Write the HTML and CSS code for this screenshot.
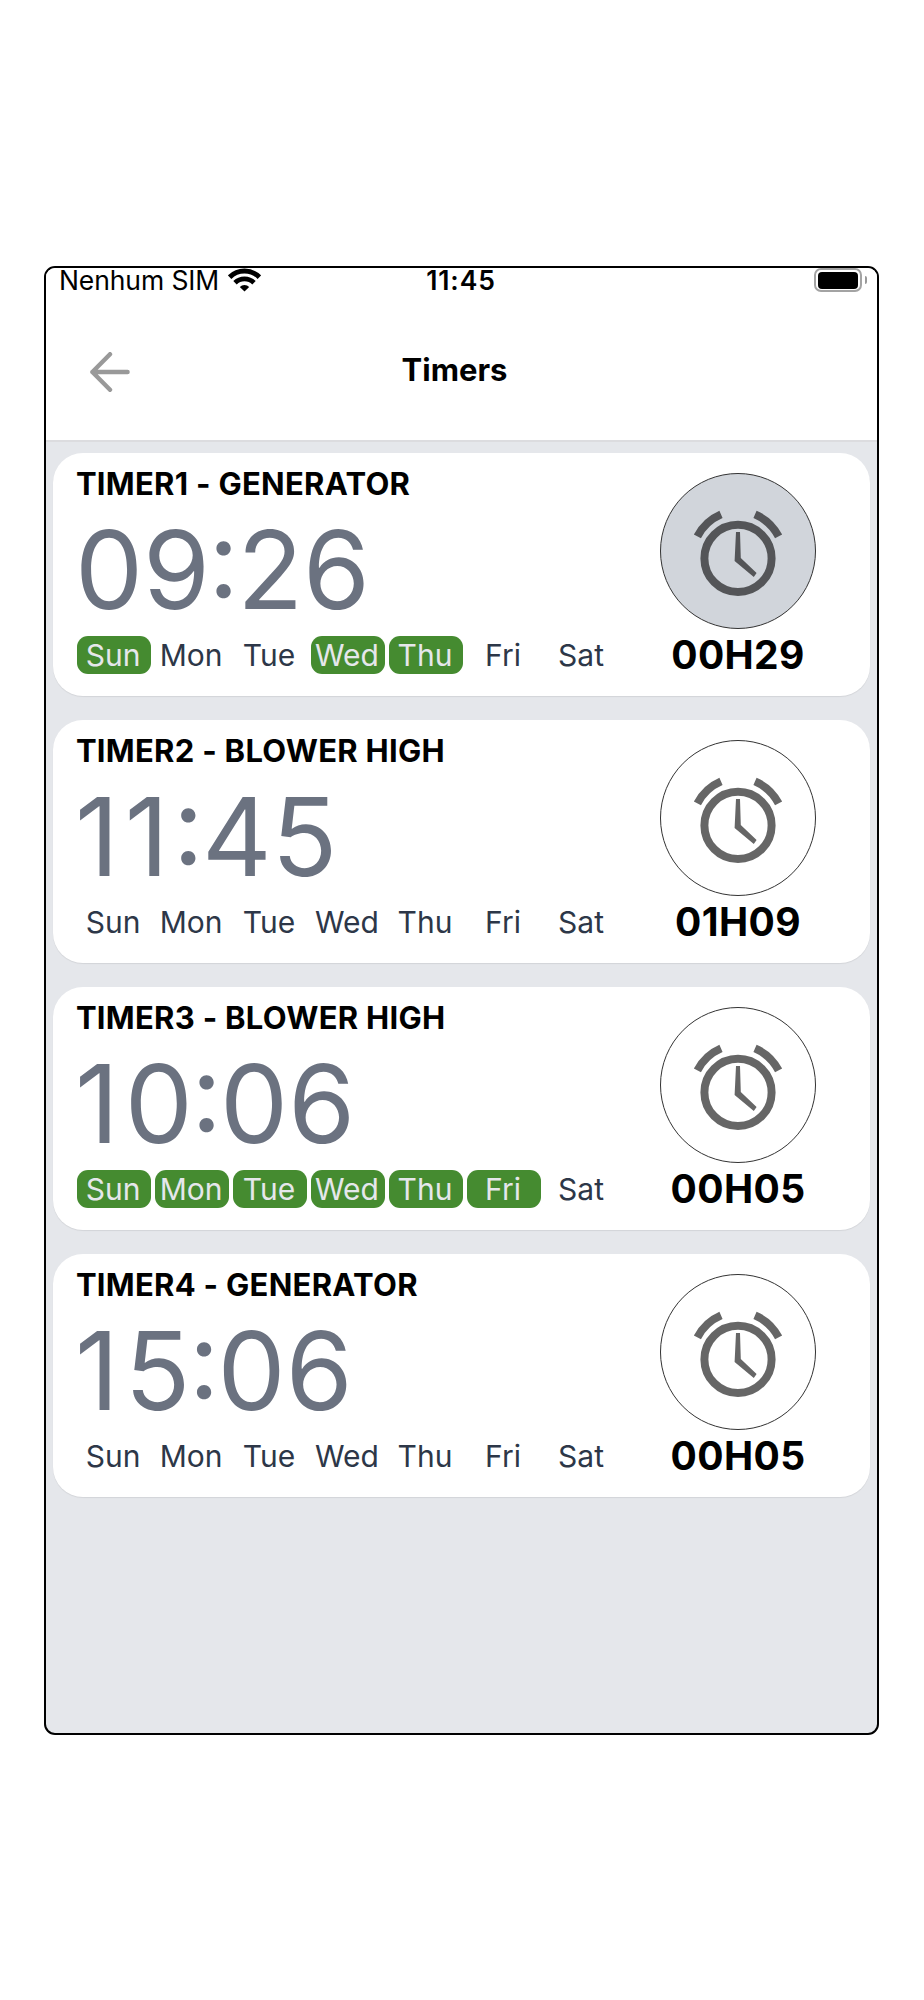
FILE: index.html
```html
<!doctype html>
<html lang="en">
<head>
    <meta charset="UTF-8">
    <meta name="viewport" content="width=device-width, initial-scale=1.0">
    <title>Timers</title>
    <link rel="stylesheet" href="styles.css">
</head>
<body>

    <svg class="sprite" width="0" height="0">
        <symbol id="alarm" viewBox="0 0 90 90">
            <circle cx="45" cy="52.4" r="33.6" fill="none" stroke="currentColor" stroke-width="8"/>
            <path d="M4.4 30.4 A48 48 0 0 1 28 8.4 M85.6 30.4 A48 48 0 0 0 62 8.4" fill="none" stroke="currentColor" stroke-width="8"/>
            <path d="M43 26 L47 26 L47.8 52 L63.6 67 L60.8 71 L41.6 55 Z" fill="currentColor"/>
        </symbol>
    </svg>

    <div class="phone">
        <div class="status">
            <div class="carrier">
                <span>Nenhum SIM</span>
                <svg class="wifi" viewBox="0 0 33 24">
                    <path d="M1.6 9.2 A21 21 0 0 1 31.4 9.2" fill="none" stroke="#000" stroke-width="5"/>
                    <path d="M7 14.8 A13.5 13.5 0 0 1 26 14.8" fill="none" stroke="#000" stroke-width="4.8"/>
                    <path d="M11.8 19 A6.6 6.6 0 0 1 21.2 19 L16.5 23.6 Z" fill="#000"/>
                </svg>
            </div>
            <span class="clock">11:45</span>
            <div class="battery">
                <div class="battery-body"><div class="battery-level"></div></div>
                <div class="battery-tip"></div>
            </div>
        </div>

        <div class="header">
            <svg class="back" viewBox="0 0 40 40">
                <path d="M20 2.2 L2.4 20 L20 37.8 M2.4 20 H37.6" fill="none" stroke="#999" stroke-width="4.4" stroke-linecap="round" stroke-linejoin="round"/>
            </svg>
            <h1>Timers</h1>
        </div>

        <div class="list">
            <div class="card">
                <div class="info">
                    <h2>TIMER1 - GENERATOR</h2>
                    <div class="time">09<span class="colon">:</span>26</div>
                    <div class="days">
                        <span class="on">Sun</span>
                        <span>Mon</span>
                        <span>Tue</span>
                        <span class="on">Wed</span>
                        <span class="on">Thu</span>
                        <span>Fri</span>
                        <span>Sat</span>
                    </div>
                </div>
                <div class="side">
                    <div class="circle active"><svg><use href="#alarm"/></svg></div>
                    <div class="duration">00H29</div>
                </div>
            </div>

            <div class="card">
                <div class="info">
                    <h2>TIMER2 - BLOWER HIGH</h2>
                    <div class="time"><span class="one">11</span><span class="colon">:</span>45</div>
                    <div class="days">
                        <span>Sun</span>
                        <span>Mon</span>
                        <span>Tue</span>
                        <span>Wed</span>
                        <span>Thu</span>
                        <span>Fri</span>
                        <span>Sat</span>
                    </div>
                </div>
                <div class="side">
                    <div class="circle"><svg><use href="#alarm"/></svg></div>
                    <div class="duration">01H09</div>
                </div>
            </div>

            <div class="card">
                <div class="info">
                    <h2>TIMER3 - BLOWER HIGH</h2>
                    <div class="time"><span class="one">1</span>0<span class="colon">:</span>06</div>
                    <div class="days">
                        <span class="on">Sun</span>
                        <span class="on">Mon</span>
                        <span class="on">Tue</span>
                        <span class="on">Wed</span>
                        <span class="on">Thu</span>
                        <span class="on">Fri</span>
                        <span>Sat</span>
                    </div>
                </div>
                <div class="side">
                    <div class="circle"><svg><use href="#alarm"/></svg></div>
                    <div class="duration">00H05</div>
                </div>
            </div>

            <div class="card">
                <div class="info">
                    <h2>TIMER4 - GENERATOR</h2>
                    <div class="time"><span class="one">1</span>5<span class="colon">:</span>06</div>
                    <div class="days">
                        <span>Sun</span>
                        <span>Mon</span>
                        <span>Tue</span>
                        <span>Wed</span>
                        <span>Thu</span>
                        <span>Fri</span>
                        <span>Sat</span>
                    </div>
                </div>
                <div class="side">
                    <div class="circle"><svg><use href="#alarm"/></svg></div>
                    <div class="duration">00H05</div>
                </div>
            </div>
        </div>
    </div>

</body>
</html>
```
FILE: styles.css
```css
* {
    box-sizing: border-box;
}
body {
    margin: 0;
    padding: 266px 45px 265px 44px;
    background: #fff;
    color: #000;
    font-family: Inter, "Liberation Sans", sans-serif;
}
h1, h2 {
    margin: 0;
}
.sprite {
    display: block;
}
.phone {
    height: 1469px;
    border: 2px solid #000;
    border-radius: 11px;
    background: #e5e7eb;
}
.status {
    display: grid;
    grid-template-columns: 1fr auto 1fr;
    height: 24px;
    padding: 0 10px 0 13px;
    border-radius: 9px 9px 0 0;
    background: #fff;
    font-size: 26.5px;
    line-height: 24px;
}
.carrier {
    display: flex;
    gap: 9px;
    letter-spacing: -0.1px;
}
.wifi {
    width: 33px;
    height: 24px;
}
.clock {
    margin-right: 4px;
    font-weight: 600;
    letter-spacing: 0.9px;
}
.battery {
    display: flex;
    justify-content: flex-end;
    align-items: center;
    gap: 3px;
}
.battery-body {
    width: 48px;
    height: 24px;
    padding: 2px;
    border: 2px solid #a3a3a3;
    border-radius: 7px;
}
.battery-level {
    height: 17px;
    border-radius: 4px;
    background: #000;
}
.battery-tip {
    width: 2px;
    height: 8px;
    border-radius: 0 2px 2px 0;
    background: #999;
}
.header {
    display: grid;
    grid-template-columns: 40px 1fr 40px;
    align-items: center;
    height: 150px;
    padding: 11px 58px 0 44px;
    border-bottom: 2px solid #dcdcdf;
    background: #fff;
}
.back {
    width: 40px;
    height: 40px;
}
.header h1 {
    padding-bottom: 3px;
    font-size: 31px;
    font-weight: 700;
    line-height: 40px;
    text-align: center;
}
.list {
    display: flex;
    flex-direction: column;
    gap: 24px;
    padding: 11px 7px;
}
.card {
    display: flex;
    justify-content: space-between;
    height: 243px;
    padding: 20px 54px 0 24.4px;
    border-radius: 30px;
    background: #fff;
    box-shadow: 0 1px 1px rgba(0, 0, 0, 0.08);
}
.card h2 {
    height: 22px;
    margin-left: -1.5px;
    font-size: 31px;
    font-weight: 700;
    line-height: 22px;
    letter-spacing: 0.28px;
}
.time {
    height: 141px;
    margin-left: -2.5px;
    color: #6b7280;
    font-size: 108px;
    line-height: 150px;
    font-kerning: none;
    font-feature-settings: "calt", "case";
}
.time .colon {
    margin: 0 -2px;
}
.time .one {
    letter-spacing: 6px;
}
.days {
    display: flex;
    gap: 4.6px;
}
.days span {
    width: 73.4px;
    height: 38px;
    padding-right: 2px;
    border-radius: 11px;
    color: #2d3748;
    font-size: 30px;
    line-height: 38px;
    text-align: center;
}
.days .on {
    background: #458b30;
    color: #e5e7eb;
}
.circle {
    display: flex;
    justify-content: center;
    align-items: center;
    width: 156px;
    height: 156px;
    border: 1px solid #333;
    border-radius: 50%;
}
.circle.active {
    background: #d1d5db;
}
.circle svg {
    width: 90px;
    height: 90px;
    color: rgba(0, 0, 0, 0.6);
}
.duration {
    font-size: 39px;
    font-weight: 700;
    line-height: 52px;
    letter-spacing: 0.4px;
    text-align: center;
}
```
